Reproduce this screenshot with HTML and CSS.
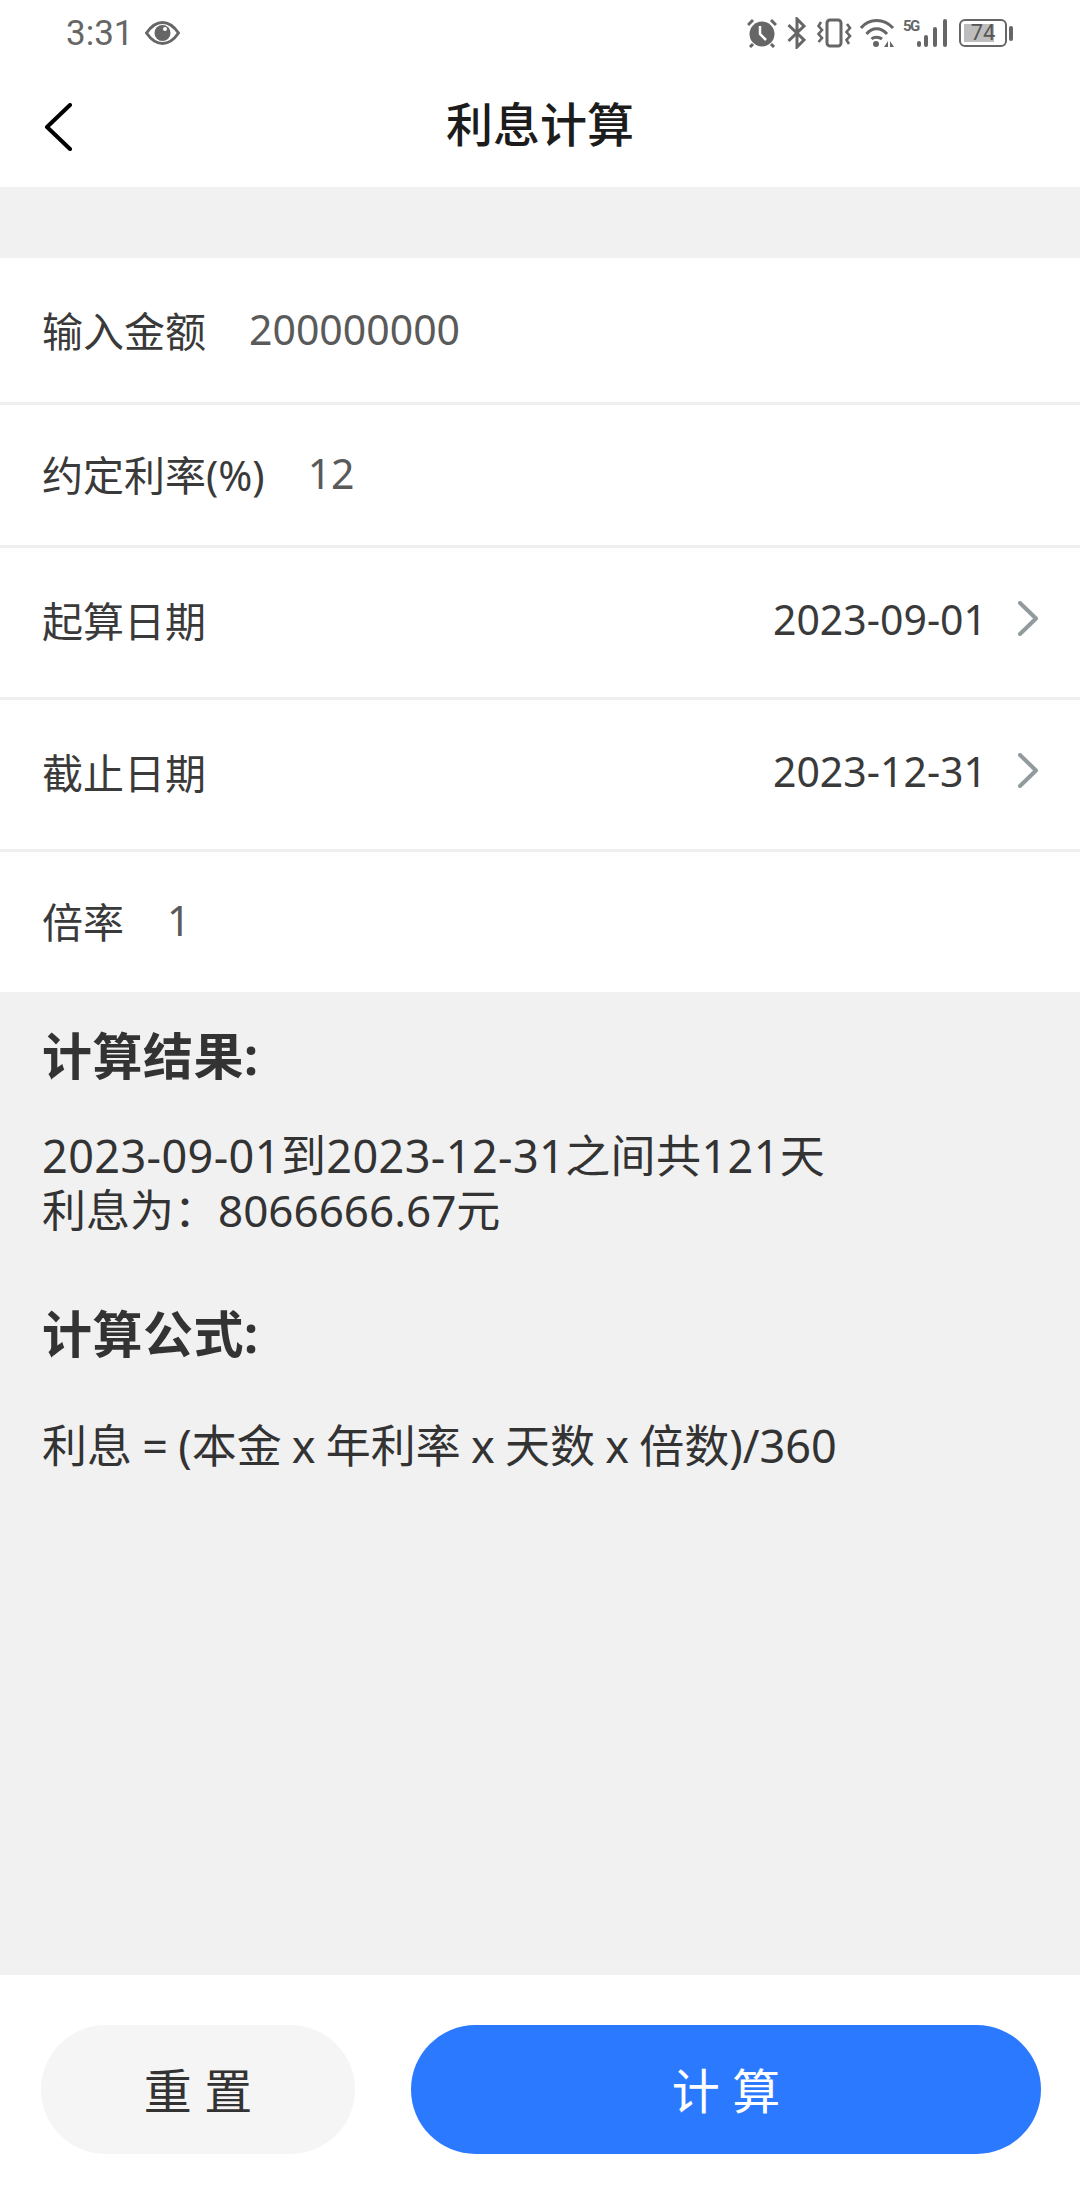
FILE: index.html
```html
<!DOCTYPE html>
<html lang="zh-CN">
<head>
    <meta charset="UTF-8">
    <meta name="viewport" content="width=device-width, initial-scale=1.0">
    <title>利息计算</title>
    <link rel="stylesheet" href="styles.css">
</head>
<body>
    <div class="status-bar">
        <div class="status-left">
            <span class="status-time">3:31</span>
            <svg class="eye" width="35" height="24" viewBox="0 0 35 24">
                <path d="M1.5 12 C7 4 12 1.5 17.5 1.5 C23 1.5 28 4 33.5 12 C28 20 23 22.5 17.5 22.5 C12 22.5 7 20 1.5 12 Z" fill="none" stroke="#666" stroke-width="3"/>
                <circle cx="17.5" cy="12" r="8" fill="#666"/>
                <circle cx="20" cy="8" r="2" fill="#fff"/>
            </svg>
        </div>
        <div class="status-right">
            <svg class="alarm" width="30" height="30" viewBox="0 0 30 30">
                <circle cx="15" cy="16" r="12.5" fill="#666"/>
                <path d="M13 8 V16 L19 22" fill="none" stroke="#fff" stroke-width="2.5"/>
                <path d="M1 7 L6 2 M29 7 L24 2 M6 26 L3 29 M24 26 L27 29" stroke="#666" stroke-width="3" fill="none"/>
            </svg>
            <svg class="bluetooth" width="19" height="32" viewBox="0 0 19 32">
                <path d="M1.5 8 L17 23 L10 30 V2 L17 9 L1.5 24" fill="none" stroke="#666" stroke-width="3"/>
            </svg>
            <svg class="vibrate" width="35" height="30" viewBox="0 0 35 30">
                <rect x="10" y="2" width="14" height="26" rx="3" fill="none" stroke="#666" stroke-width="3"/>
                <path d="M4 4 L1.5 8 L5 12 L1.5 16 L5 20 L1.5 24 M30 6 L33 10 L29.5 14 L33 18 L29.5 22 L32 26" fill="none" stroke="#666" stroke-width="2.6"/>
            </svg>
            <svg class="wifi" width="35" height="30" viewBox="0 0 35 30">
                <path d="M1 10 C9 0 24 0 33 10 M6.5 16 C12 9 21 9 27 16 M11.5 21 C14 18.5 19 18.5 22 21" fill="none" stroke="#666" stroke-width="3"/>
                <circle cx="16" cy="26" r="3" fill="#666"/>
                <path d="M24 29 L28 23 V29 Z M30 23 L34 29 H30 Z" fill="#666"/>
            </svg>
            <span class="five-g">5G</span>
            <svg class="signal" width="30" height="30" viewBox="0 0 30 30">
                <rect x="0" y="23" width="4" height="6" rx="2" fill="#666"/>
                <rect x="7" y="17" width="4" height="12" rx="2" fill="#666"/>
                <rect x="16" y="9" width="4" height="20" rx="2" fill="#666"/>
                <rect x="26" y="1" width="4" height="28" rx="2" fill="#666"/>
            </svg>
            <div class="battery">
                <div class="battery-body">
                    <div class="battery-level"></div>
                    <span class="battery-num">74</span>
                </div>
                <div class="battery-cap"></div>
            </div>
        </div>
    </div>

    <div class="nav-bar">
        <svg class="back" width="30" height="48" viewBox="0 0 30 48">
            <path d="M27 2 L4 24 L27 46" fill="none" stroke="#000" stroke-width="4" stroke-linecap="round" stroke-linejoin="round"/>
        </svg>
        <h1 class="nav-title">利息计算</h1>
    </div>

    <div class="gap"></div>

    <div class="form">
        <div class="row row-first">
            <span class="label">输入金额</span>
            <span class="value muted">200000000</span>
        </div>
        <div class="row row-a">
            <span class="label">约定利率(%)</span>
            <span class="value muted">12</span>
        </div>
        <div class="row row-b">
            <span class="label">起算日期</span>
            <span class="date">2023-09-01</span>
            <svg class="arrow" width="20" height="35" viewBox="0 0 20 35">
                <path d="M2 2 L18 17.5 L2 33" fill="none" stroke="#919a9c" stroke-width="4" stroke-linecap="round" stroke-linejoin="round"/>
            </svg>
        </div>
        <div class="row row-b">
            <span class="label">截止日期</span>
            <span class="date">2023-12-31</span>
            <svg class="arrow" width="20" height="35" viewBox="0 0 20 35">
                <path d="M2 2 L18 17.5 L2 33" fill="none" stroke="#919a9c" stroke-width="4" stroke-linecap="round" stroke-linejoin="round"/>
            </svg>
        </div>
        <div class="row row-last">
            <span class="label">倍率</span>
            <span class="value muted">1</span>
        </div>
    </div>

    <div class="result">
        <h2 class="result-title">计算结果:</h2>
        <div class="result-text">
            <div class="line-range">2023-09-01到2023-12-31之间共121天</div>
            <div class="line-sum">利息为&#xFF1A;8066666.67元</div>
        </div>
        <h2 class="result-title formula-title">计算公式:</h2>
        <p class="formula-text">利息 = (本金 x 年利率 x 天数 x 倍数)/360</p>
    </div>

    <div class="footer">
        <button type="button" class="btn btn-reset">重 置</button>
        <button type="button" class="btn btn-calc">计 算</button>
    </div>
</body>
</html>
```

FILE: styles.css
```css
* {
    box-sizing: border-box;
}

html, body {
    height: 100%;
}

body {
    display: flex;
    flex-direction: column;
    margin: 0;
    background-color: #fff;
    color: #333;
    font-family: "Noto Sans", "Noto Sans CJK SC", sans-serif;
}

.status-bar {
    display: flex;
    justify-content: space-between;
    align-items: center;
    height: 66px;
    padding: 0 67px 0 66px;
    color: #666;
}

.status-left {
    display: flex;
    align-items: center;
    gap: 11px;
}

.status-time {
    font-family: Roboto, sans-serif;
    font-size: 35px;
}

.status-right {
    display: flex;
    align-items: center;
}

.bluetooth {
    margin-left: 10px;
}

.vibrate {
    margin-left: 11px;
}

.wifi {
    margin-left: 8px;
}

.five-g {
    align-self: flex-start;
    width: 14px;
    margin: 1px 0 0 8px;
    font-family: Roboto, sans-serif;
    font-size: 15px;
    font-weight: 700;
    line-height: 16px;
    letter-spacing: -1.5px;
}

.battery {
    display: flex;
    align-items: center;
    gap: 2px;
    margin-left: 12px;
}

.battery-body {
    position: relative;
    width: 48px;
    height: 28px;
    padding: 3px;
    border: 2.5px solid #666;
    border-radius: 6px;
}

.battery-level {
    width: 30px;
    height: 100%;
    background-color: #bdbdbd;
}

.battery-num {
    position: absolute;
    top: 0;
    left: 0;
    width: 100%;
    font-family: Roboto, sans-serif;
    font-size: 22px;
    line-height: 23px;
    text-align: center;
    color: #555;
}

.battery-cap {
    width: 4px;
    height: 15px;
    border-radius: 2px;
    background-color: #666;
}

.nav-bar {
    position: relative;
    display: flex;
    justify-content: center;
    align-items: center;
    height: 121px;
    padding-bottom: 10px;
}

.back {
    position: absolute;
    left: 43px;
    top: 37px;
}

.nav-title {
    margin: 0;
    color: #1c1c1c;
    font-size: 47px;
    font-weight: 500;
}

.gap {
    height: 71px;
    background-color: #f1f1f2;
}

.row {
    display: flex;
    align-items: center;
    padding: 0 42px;
    font-size: 41px;
    border-bottom: 3px solid #eeeff0;
}

.row-first {
    height: 147px;
    padding-bottom: 2px;
}

.row-a {
    height: 143px;
    padding-bottom: 4px;
}

.row-b {
    height: 152px;
    padding-bottom: 8px;
}

.row-last {
    height: 140px;
    padding-bottom: 4px;
    border-bottom: none;
}

.label {
    color: #3a3a3a;
}

.value {
    margin-left: 43px;
}

.muted {
    color: #5a5a5a;
}

.date {
    margin-left: auto;
    color: #3a3a3a;
}

.arrow {
    margin-left: 31px;
}

.result {
    flex: 1;
    padding: 35px 42px 0;
    background-color: #f1f1f2;
}

.result-title {
    margin: 0;
    font-size: 50px;
    font-weight: 700;
    line-height: 58px;
    letter-spacing: 0.5px;
}

.result-text {
    margin-top: 44px;
    font-size: 45px;
    line-height: 54px;
}

.line-range {
    letter-spacing: 0.4px;
}

.line-sum {
    font-size: 44px;
}

.formula-title {
    margin-top: 68px;
}

.formula-text {
    margin: 56px 0 0;
    font-size: 45px;
    line-height: 54px;
    word-spacing: -1.5px;
}

.footer {
    display: flex;
    gap: 56px;
    height: 229px;
    padding: 50px 39px 0 41px;
}

.btn {
    height: 129px;
    padding: 0 0 4px;
    border: none;
    border-radius: 65px;
    font-family: inherit;
    font-size: 48px;
}

.btn-reset {
    width: 314px;
    background-color: #f5f5f5;
    color: #333;
}

.btn-calc {
    flex: 1;
    background-color: #2b79ff;
    color: #fff;
}
```
